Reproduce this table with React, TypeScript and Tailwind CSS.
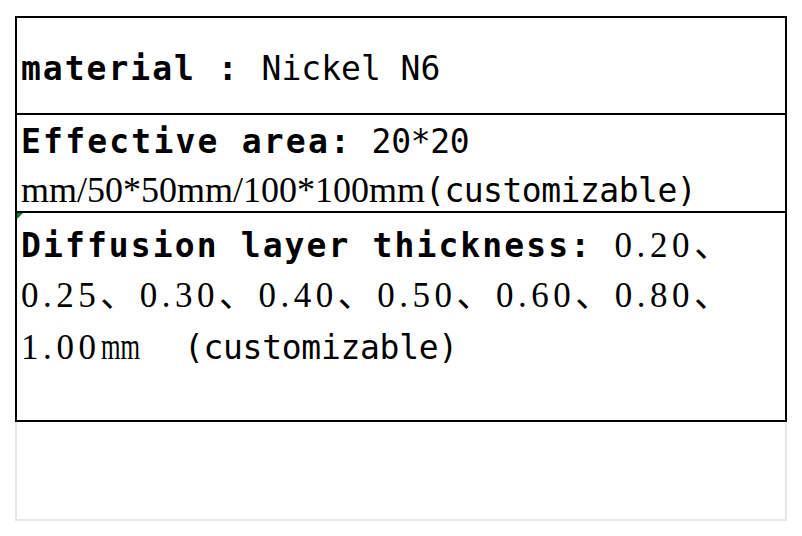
import React from 'react';

// spec table, rendered like a pasted Word/Excel cell block
const mono = "font-['DejaVu_Sans_Mono',monospace] text-[33px] leading-none";
const serif = "font-['Liberation_Serif','Noto_Sans_CJK_SC',serif] leading-none";
const strut = "font-['Liberation_Serif',serif] text-[16px] whitespace-pre";

const App: React.FC = () => {
    return (
        <div className="w-[802px] h-[536px] bg-white pt-[16px] px-[15px] text-black">
            {/* Table */}
            <div className="border-2 border-black">
                {/* Row 1 */}
                <div className={`${strut} h-[97px] border-b-2 border-black pl-[4px] pt-[32px] leading-[50px]`}>
                    <span className={`${mono} font-bold tracking-[2px]`}>material : </span>
                    <span className={`${mono}`}>Nickel N6</span>
                </div>

                {/* Row 2 */}
                <div className={`${strut} h-[98px] border-b-2 border-black pl-[4px] pt-[8px] leading-[49px]`}>
                    <div>
                        <span className={`${mono} font-bold tracking-[2.2px]`}>Effective area:</span>
                        <span className={`${mono} tracking-[-0.3px]`}> 20*20</span>
                    </div>
                    <div>
                        <span className={`${serif} text-[36px]`}>mm/50*50mm/100*100mm</span>
                        <span className={`${mono} tracking-[-0.5px]`}>(customizable)</span>
                    </div>
                </div>

                {/* Row 3 */}
                <div className={`${strut} relative h-[207px] pl-[4px] pt-[14px] leading-[50px]`}>
                    <span className="absolute left-0 top-0 w-0 h-0 border-t-[6px] border-r-[6px] border-t-green-700 border-r-transparent" />
                    <div>
                        <span className={`${mono} font-bold tracking-[2.1px]`}>Diffusion layer thickness:</span>
                        <span className={`${serif} text-[35px] tracking-[4.6px] ml-[9px]`}> 0.20、</span>
                    </div>
                    <div>
                        <span className={`${serif} text-[35px] tracking-[4.5px]`}>0.25、0.30、0.40、0.50、0.60、0.80、</span>
                    </div>
                    <div>
                        <span className={`${serif} text-[35px] tracking-[4.6px]`}>1.00</span>
                        <span className={`${serif} text-[38px] inline-block origin-left scale-x-[0.66] mr-[-20px]`}>mm</span>
                        <span className={`${mono} tracking-[-0.3px] ml-[5px]`}>  (customizable)</span>
                    </div>
                </div>
            </div>

            {/* Empty trailing cell */}
            <div className="h-[99px] border-2 border-t-0 border-[#e6e6e6]" />
        </div>
    );
};

export default App;
